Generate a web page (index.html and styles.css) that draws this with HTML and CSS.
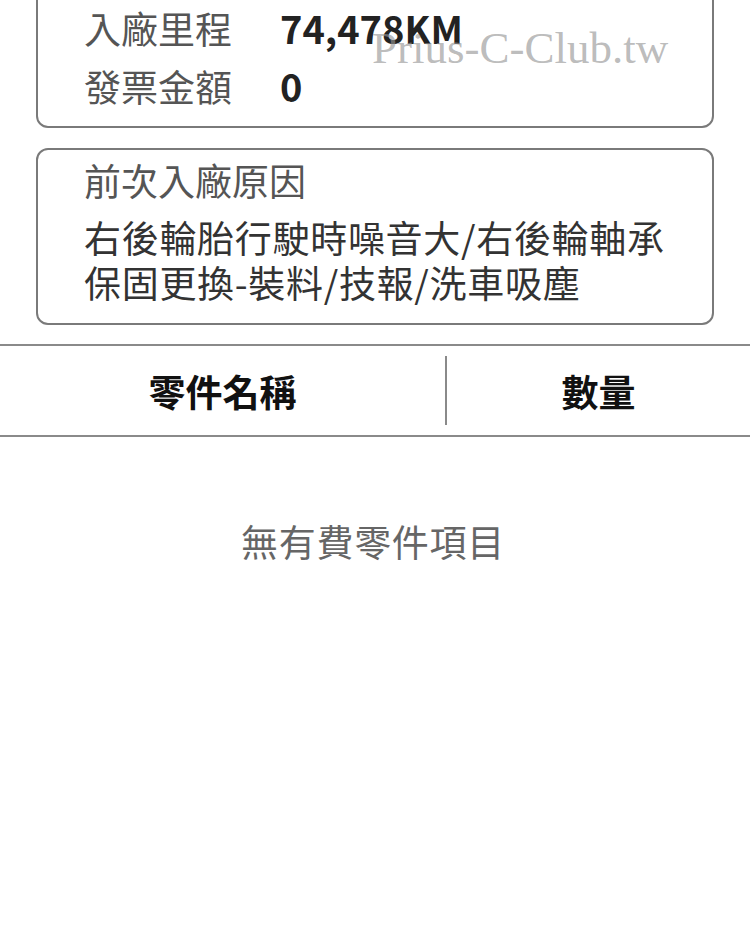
FILE: index.html
```html
<!DOCTYPE html>
<html lang="zh-Hant">
<head>
<meta charset="utf-8">
<title>入廠資訊</title>
<link rel="stylesheet" href="styles.css">
</head>
<body>
<div class="page">
  <section class="card card-info">
    <div class="info-grid">
      <div class="label">入廠里程</div>
      <div class="value">74,478KM</div>
      <div class="label">發票金額</div>
      <div class="value">0</div>
    </div>
    <div class="watermark">Prius-C-Club.tw</div>
  </section>

  <section class="card card-reason">
    <div class="reason-title">前次入廠原因</div>
    <div class="reason-text">右後輪胎行駛時噪音大/右後輪軸承<br>保固更換-裝料/技報/洗車吸塵</div>
  </section>
</div>

<div class="table-head">
  <div class="th th-name">零件名稱</div>
  <div class="th-sep"></div>
  <div class="th th-qty">數量</div>
</div>

<div class="empty">無有費零件項目</div>
</body>
</html>
```

FILE: styles.css
```css
html, body {
  margin: 0;
  padding: 0;
  background: #ffffff;
}

body {
  width: 750px;
  height: 937px;
  overflow: hidden;
  font-family: "Noto Sans CJK TC", "Noto Sans", sans-serif;
  color: #333;
}

.page {
  padding: 0 36px;
}

.card {
  border: 2px solid #7a7a7a;
  border-radius: 12px;
  box-sizing: border-box;
}

.card-info {
  position: relative;
  margin-top: -30px;
  padding: 27px 46px 11px 46px;
}

.info-grid {
  display: grid;
  grid-template-columns: auto 1fr;
  column-gap: 48px;
  line-height: 58px;
}

.label {
  font-size: 37px;
  color: #555;
}

.value {
  font-size: 38px;
  font-weight: 700;
  color: #222;
}

.watermark {
  position: absolute;
  left: 334px;
  top: 51px;
  font-family: "Liberation Serif", "Times New Roman", serif;
  font-size: 45px;
  line-height: 50px;
  color: rgba(150, 150, 150, 0.65);
  white-space: nowrap;
}

.card-reason {
  margin-top: 20px;
  padding: 8px 10px 18px 46px;
}

.reason-title {
  font-size: 37px;
  line-height: 44px;
  color: #555;
  margin-bottom: 13px;
}

.reason-text {
  font-size: 37px;
  line-height: 45px;
  color: #333;
  letter-spacing: 0.7px;
  white-space: nowrap;
}

.table-head {
  margin-top: 19px;
  display: grid;
  grid-template-columns: 445px 2px 1fr;
  height: 93px;
  box-sizing: border-box;
  border-top: 2px solid #8a8a8a;
  border-bottom: 2px solid #8a8a8a;
}

.th {
  display: flex;
  align-items: center;
  justify-content: center;
  font-size: 37px;
  font-weight: 700;
  color: #111;
}

.th-sep {
  background: #8a8a8a;
  margin: 10px 0;
}

.empty {
  padding-top: 79px;
  text-align: center;
  font-size: 37px;
  line-height: 50px;
  color: #666;
  letter-spacing: 0.7px;
  padding-right: 4px;
}
```
